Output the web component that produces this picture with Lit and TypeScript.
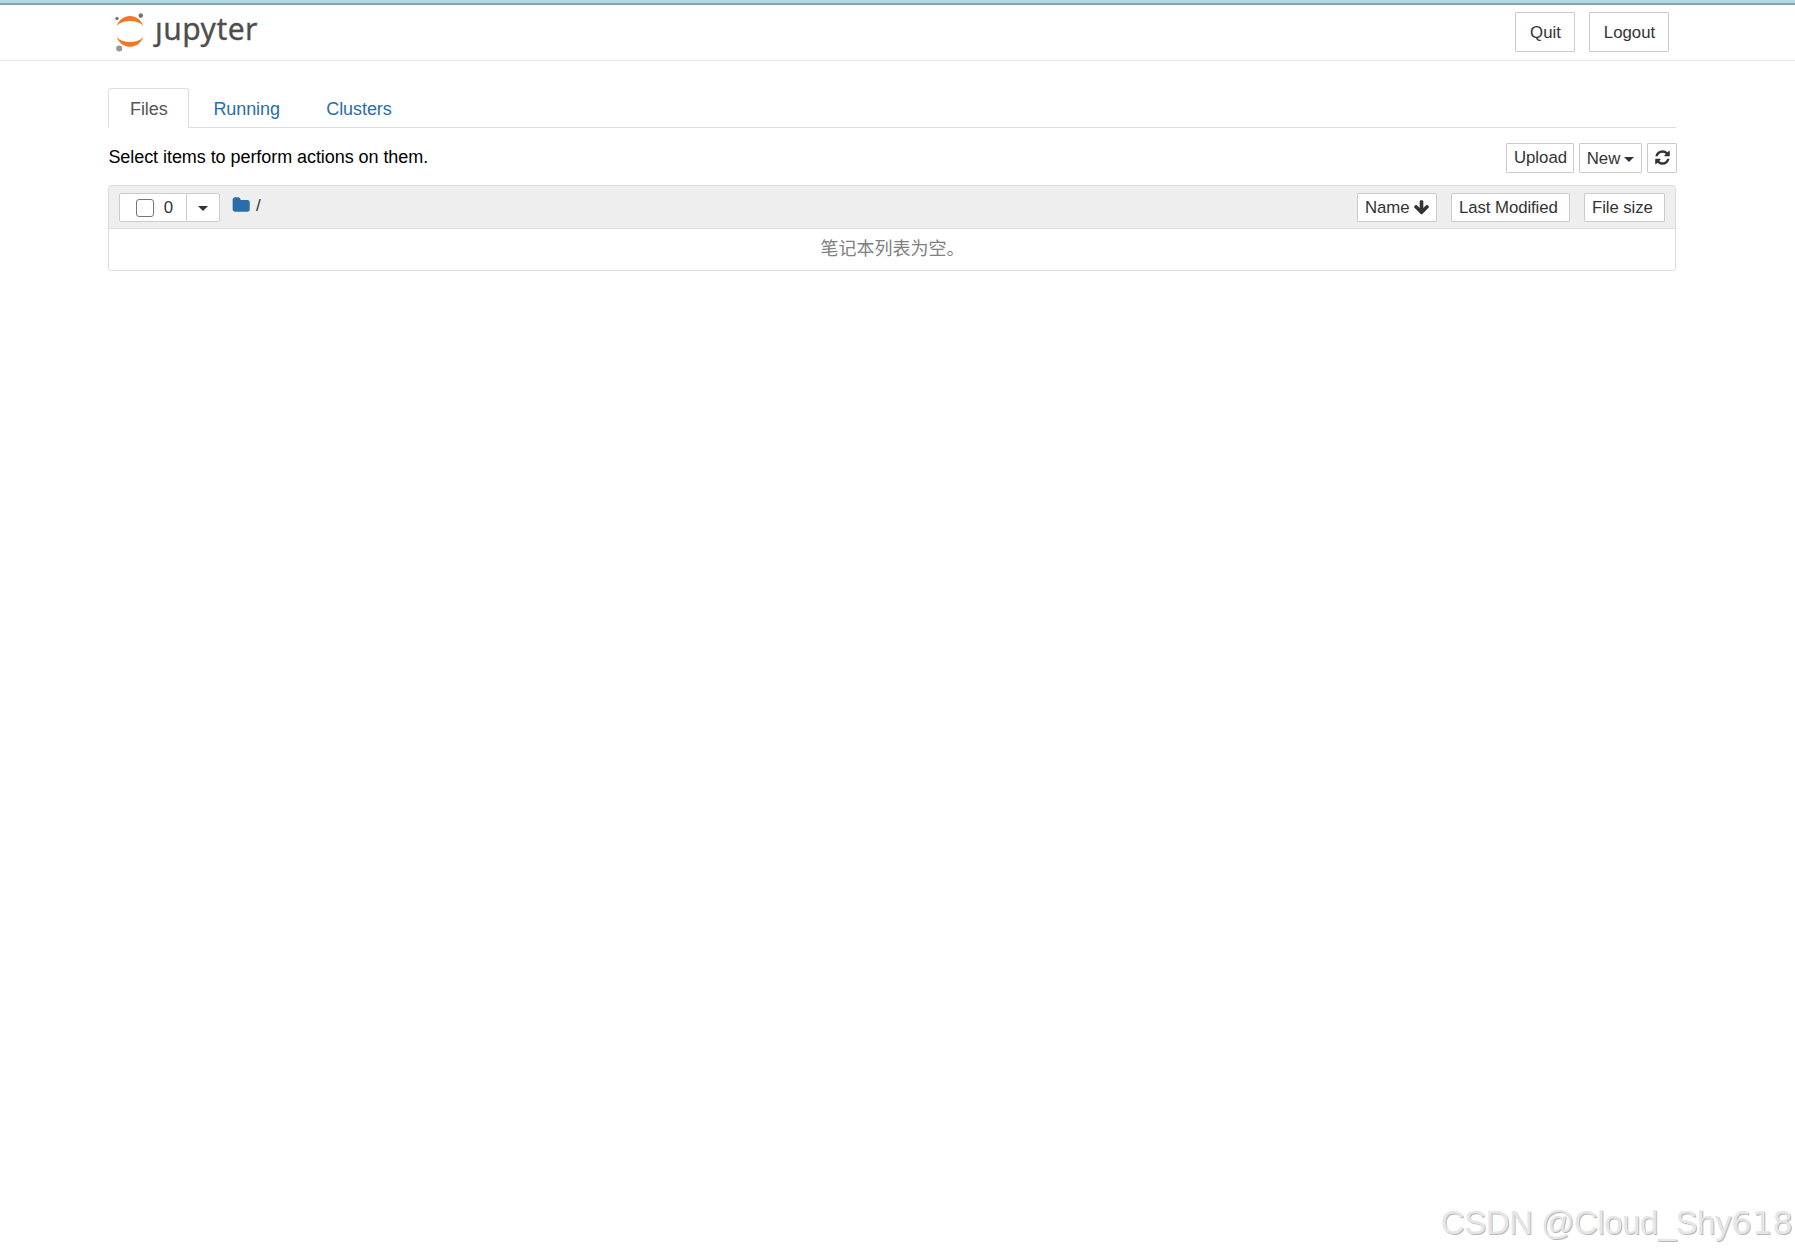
import { LitElement, html, css, svg } from "lit";
import { customElement } from "lit/decorators.js";

const REFRESH =
  "M1639 1056q0 5-1 7-64 268-268 434.5t-478 166.5q-146 0-282.5-55t-243.5-157l-129 129q-19 19-45 19t-45-19-19-45v-448q0-26 19-45t45-19h448q26 0 45 19t19 45-19 45l-137 137q71 66 161 102t187 36q134 0 250-65t186-179q11-17 53-117 8-23 30-23h192q13 0 22.5 9.5t9.5 22.5zm25-800v448q0 26-19 45t-45 19h-448q-26 0-45-19t-19-45 19-45l138-138q-148-137-349-137-134 0-250 65t-186 179q-11 17-53 117-8 23-30 23h-199q-13 0-22.5-9.5t-9.5-22.5v-7q65-268 270-434.5t480-166.5q146 0 284 55.5t245 156.5l130-129q19-19 45-19t45 19 19 45z";
const ARROW_DOWN =
  "M1675 832q0 53-37 90l-651 652q-39 37-91 37-53 0-90-37l-651-652q-38-36-38-90 0-53 38-91l74-75q39-37 91-37 53 0 90 37l294 294v-704q0-52 38-90t90-38h128q52 0 90 38t38 90v704l294-294q37-37 90-37 52 0 91 37l75 75q37 39 37 91z";
const FOLDER =
  "M1728 608v704q0 92-66 158t-158 66h-1216q-92 0-158-66t-66-158v-960q0-92 66-158t158-66h320q92 0 158 66t66 158v32h672q92 0 158 66t66 158z";

const icon = (d: string, cls: string) => html`
  <svg class="icon ${cls}" viewBox="0 0 1792 1792" aria-hidden="true">${svg`<path d=${d}></path>`}</svg>
`;

@customElement("app-root")
export class AppRoot extends LitElement {
  static styles = css`
    :host {
      display: block;
      position: relative;
      box-sizing: border-box;
      height: 1254px;
      overflow: hidden;
      background: #fff;
      color: #000;
      font: 18px/26px "Liberation Sans", "Noto Sans CJK SC", sans-serif;
    }
    * { box-sizing: border-box; }
    .topline { height: 5px; background: #b0d9e1; border-bottom: 2px solid #84a4ac; }
    .header {
      display: flex;
      height: 56px;
      padding: 0 126px 0 108px;
      border-bottom: 1px solid #e7e7e7;
      align-items: flex-start;
    }
    .logo { width: 160px; height: 54px; display: block; overflow: visible; }
    .logo text { font: 30px "Noto Sans", sans-serif; fill: #4e4e4e; stroke: #4e4e4e; stroke-width: 0.3px; }
    .session { display: flex; gap: 14px; margin: 7px 0 0 auto; }
    .btn {
      display: flex;
      align-items: center;
      justify-content: center;
      margin: 0;
      padding: 0;
      border: 1px solid #ccc;
      border-radius: 1px;
      background: #fff;
      color: #333;
      font: 16.8px/24px "Liberation Sans", sans-serif;
      white-space: nowrap;
    }
    .quit { width: 60px; height: 40px; padding: 2px 0 0 1px; }
    .logout { width: 80px; height: 40px; padding: 2px 0 0 1px; }
    .content { padding: 27px 119px 0 108px; }
    .tabs { display: flex; height: 40px; border-bottom: 1px solid #ddd; letter-spacing: -0.08px; }
    .tab { height: 39px; padding: 7px 21px 0; margin-right: 2.4px; border: 1px solid transparent; color: #296eaa; line-height: 26px; }
    .tab.active { width: 81px; height: 40px; border-color: #ddd; border-bottom-color: #fff; border-radius: 3px 3px 0 0; background: #fff; color: #555; }
    .toolbar { display: flex; height: 57px; padding-top: 15px; margin-right: -1px; }
    .hint { margin: 1px 0 0 0.4px; letter-spacing: -0.06px; }
    .actions { display: flex; gap: 5px; margin-left: auto; }
    .actions .btn { height: 30px; }
    .upload { width: 68px; padding: 0 0 1px 1px; }
    .new { width: 63px; gap: 4px; padding-top: 1px; }
    .refresh { width: 30px; padding-bottom: 1px; }
    .caret { width: 0; height: 0; border: 5px solid transparent; border-top-color: #333; border-bottom: 0; margin-top: 2px; }
    .icon { display: block; flex: none; width: 17px; height: 17px; fill: currentColor; }
    .list { height: 86px; border: 1px solid #ddd; border-radius: 3px; }
    .list-header { display: flex; height: 43px; padding: 7px 10px 0; background: #eee; border-bottom: 1px solid #ddd; }
    .selector { display: flex; }
    .pick { width: 68px; height: 29px; padding-left: 3px; gap: 10px; border-radius: 2px 0 0 2px; }
    .box { width: 18px; height: 18px; border: 1.5px solid #767676; border-radius: 3px; background: #fff; }
    .drop { width: 34px; height: 29px; margin-left: -1px; border-radius: 0 2px 2px 0; }
    .crumbs { display: flex; margin-left: 11.5px; color: #333; font-size: 17px; line-height: 25px; }
    .folder { width: 18.4px; height: 18.4px; margin: 3px 6px 0 0; color: #296eaa; }
    .sorters { display: flex; gap: 14px; margin-left: auto; }
    .sorters .btn { height: 29px; justify-content: flex-start; padding-left: 7px; letter-spacing: -0.08px; }
    .name { width: 80px; gap: 4px; }
    .modified { width: 119px; }
    .size { width: 81px; }
    .empty { text-align: center; color: #808080; padding: 7px 0 0 1px; }
    .watermark {
      position: absolute;
      right: 2px;
      bottom: 12px;
      color: #e6e6e6;
      font-size: 33px;
      line-height: 38px;
      letter-spacing: -0.5px;
      white-space: nowrap;
      text-shadow: 1px 1px 0 #b8b8b8;
    }
    .digits { font-family: "DejaVu Sans", sans-serif; font-size: 32.5px; letter-spacing: 0; line-height: 1; }
  `;

  render() {
    return html`
      <div class="topline"></div>
      <header class="header">
        <svg class="logo" viewBox="108 5 160 54" role="img" aria-label="jupyter">
          <path fill="#f37726" d="M116.6 26C119 19.8 124 16 130 16s11 3.8 13.4 10C140.5 22.7 135.6 21 130 21s-10.5 1.7-13.4 5z"></path>
          <path fill="#f37726" d="M116.6 37C119 43.1 124 46.8 130 46.8s11-3.7 13.4-9.8C140.5 40.2 135.6 42 130 42s-10.5-1.8-13.4-5z"></path>
          <circle cx="117" cy="18.5" r="1.7" fill="#767677"></circle>
          <circle cx="140.8" cy="15.6" r="2.3" fill="#767677"></circle>
          <circle cx="119.2" cy="48.6" r="3" fill="#989798"></circle>
          <text x="155" y="39.5" textLength="102.5" lengthAdjust="spacing">ȷupyter</text>
        </svg>
        <div class="session">
          <button class="btn quit">Quit</button>
          <button class="btn logout">Logout</button>
        </div>
      </header>
      <main class="content">
        <nav class="tabs">
          <a class="tab active">Files</a>
          <a class="tab">Running</a>
          <a class="tab">Clusters</a>
        </nav>
        <div class="toolbar">
          <div class="hint">Select items to perform actions on them.</div>
          <div class="actions">
            <button class="btn upload">Upload</button>
            <button class="btn new">New<span class="caret"></span></button>
            <button class="btn refresh">${icon(REFRESH, "")}</button>
          </div>
        </div>
        <section class="list">
          <div class="list-header">
            <div class="selector">
              <button class="btn pick"><span class="box"></span>0</button>
              <button class="btn drop"><span class="caret"></span></button>
            </div>
            <div class="crumbs">${icon(FOLDER, "folder")}<span>/</span></div>
            <div class="sorters">
              <button class="btn name">Name${icon(ARROW_DOWN, "")}</button>
              <button class="btn modified">Last Modified</button>
              <button class="btn size">File size</button>
            </div>
          </div>
          <div class="empty">笔记本列表为空。</div>
        </section>
      </main>
      <div class="watermark">CSDN @Cloud_Shy<span class="digits">618</span></div>
    `;
  }
}
